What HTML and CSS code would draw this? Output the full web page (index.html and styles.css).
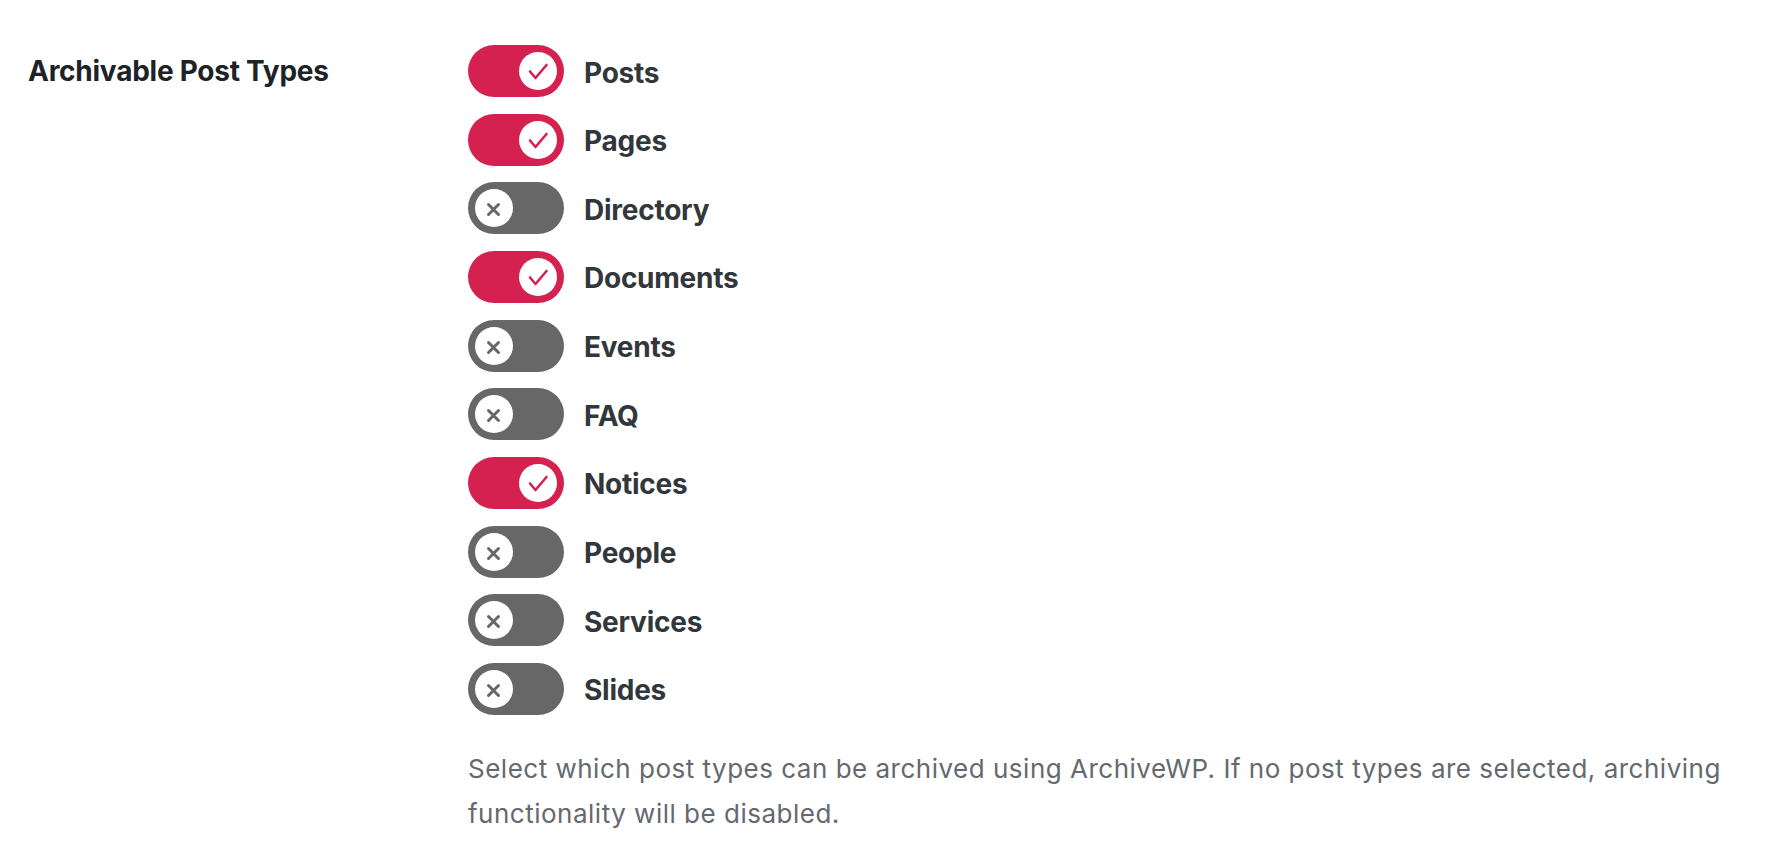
FILE: index.html
```html
<!DOCTYPE html>
<html lang="en">
<head>
  <meta charset="UTF-8" />
  <meta name="viewport" content="width=device-width, initial-scale=1.0" />
  <title>ArchiveWP Settings</title>
  <link rel="stylesheet" href="styles.css">
</head>
<body>
  <div class="form-row">
    <div class="row-label">Archivable Post Types</div>
    <div class="row-field">
      <ul class="toggle-list">
        <li class="toggle-item"><span class="toggle on"><span class="knob"><svg viewBox="0 0 38 38"><path d="M11 19.5l5.5 6.5 11-13" /></svg></span></span><span class="toggle-label">Posts</span></li>
        <li class="toggle-item"><span class="toggle on"><span class="knob"><svg viewBox="0 0 38 38"><path d="M11 19.5l5.5 6.5 11-13" /></svg></span></span><span class="toggle-label">Pages</span></li>
        <li class="toggle-item"><span class="toggle"><span class="knob"><svg viewBox="0 0 38 38"><path d="M13.5 15.5l10 10M23.5 15.5l-10 10" /></svg></span></span><span class="toggle-label">Directory</span></li>
        <li class="toggle-item"><span class="toggle on"><span class="knob"><svg viewBox="0 0 38 38"><path d="M11 19.5l5.5 6.5 11-13" /></svg></span></span><span class="toggle-label">Documents</span></li>
        <li class="toggle-item"><span class="toggle"><span class="knob"><svg viewBox="0 0 38 38"><path d="M13.5 15.5l10 10M23.5 15.5l-10 10" /></svg></span></span><span class="toggle-label">Events</span></li>
        <li class="toggle-item"><span class="toggle"><span class="knob"><svg viewBox="0 0 38 38"><path d="M13.5 15.5l10 10M23.5 15.5l-10 10" /></svg></span></span><span class="toggle-label">FAQ</span></li>
        <li class="toggle-item"><span class="toggle on"><span class="knob"><svg viewBox="0 0 38 38"><path d="M11 19.5l5.5 6.5 11-13" /></svg></span></span><span class="toggle-label">Notices</span></li>
        <li class="toggle-item"><span class="toggle"><span class="knob"><svg viewBox="0 0 38 38"><path d="M13.5 15.5l10 10M23.5 15.5l-10 10" /></svg></span></span><span class="toggle-label">People</span></li>
        <li class="toggle-item"><span class="toggle"><span class="knob"><svg viewBox="0 0 38 38"><path d="M13.5 15.5l10 10M23.5 15.5l-10 10" /></svg></span></span><span class="toggle-label">Services</span></li>
        <li class="toggle-item"><span class="toggle"><span class="knob"><svg viewBox="0 0 38 38"><path d="M13.5 15.5l10 10M23.5 15.5l-10 10" /></svg></span></span><span class="toggle-label">Slides</span></li>
      </ul>
      <p class="description">Select which post types can be archived using ArchiveWP. If no post types are selected, archiving functionality will be disabled.</p>
    </div>
  </div>
</body>
</html>
```

FILE: styles.css
```css
:root {
  --on-color: #d5214f;
  --off-color: #676767;
  --heading-color: #1d2327;
  --label-color: #32373c;
  --desc-color: #646970;
}
body {
  margin: 0;
  background: #fff;
  font-family: Inter, "Noto Sans", sans-serif;
}
.form-row {
  display: flex;
  padding: 45px 0 0 28px;
}
.row-label {
  width: 440px;
  flex-shrink: 0;
  font-size: 28px;
  font-weight: 700;
  letter-spacing: -0.25px;
  line-height: 52px;
  color: var(--heading-color);
}
.row-field {
  width: 1290px;
}
.toggle-list {
  list-style: none;
  margin: 0;
  padding: 0;
  display: flex;
  flex-direction: column;
  gap: 16.67px;
}
.toggle-item {
  display: flex;
  align-items: center;
  gap: 20px;
  height: 52px;
}
.toggle {
  display: flex;
  align-items: center;
  width: 96px;
  height: 52px;
  padding: 0 7px;
  box-sizing: border-box;
  border-radius: 26px;
  background: var(--off-color);
}
.toggle.on {
  background: var(--on-color);
  justify-content: flex-end;
}
.knob {
  width: 38px;
  height: 38px;
  border-radius: 50%;
  background: #fff;
  display: flex;
}
.knob svg {
  width: 38px;
  height: 38px;
  fill: none;
  stroke: var(--off-color);
  stroke-width: 3;
  stroke-linecap: round;
  stroke-linejoin: round;
}
.toggle.on .knob svg {
  stroke: var(--on-color);
  stroke-width: 2.6;
}
.toggle-label {
  padding-top: 3px;
  font-size: 28px;
  font-weight: 700;
  letter-spacing: -0.25px;
  color: var(--label-color);
}
.description {
  margin: 31px 0 0;
  font-size: 26px;
  letter-spacing: 0.5px;
  line-height: 45px;
  color: var(--desc-color);
}
```
